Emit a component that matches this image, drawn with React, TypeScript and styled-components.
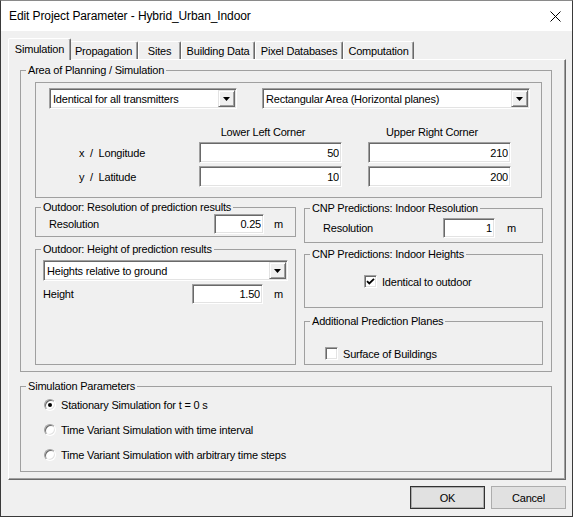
import React from 'react';
import styled, { createGlobalStyle, css } from 'styled-components';

const GlobalStyle = createGlobalStyle`
  html, body {
    margin: 0;
    padding: 0;
    background: #2d2d2d;
  }
`;

const Window = styled.div`
  box-sizing: border-box;
  width: 573px;
  height: 517px;
  display: flex;
  flex-direction: column;
  background: #f0f0f0;
  border: 1px solid #3a3a3a;
  border-top-color: #8a8a8a;
  font-family: "Liberation Sans", Arial, sans-serif;
  font-size: 11px;
  letter-spacing: -0.2px;
  color: #000;
`;

const TitleBar = styled.div`
  height: 30px;
  flex-shrink: 0;
  background: #fff;
  display: flex;
  align-items: center;
  justify-content: space-between;
  padding: 0 11px 0 8px;
  font-size: 12px;
  letter-spacing: -0.1px;
`;

const Body = styled.div`
  flex: 1;
  display: flex;
  flex-direction: column;
  padding: 6px 6px 0 7px;
`;

const TabStrip = styled.div`
  height: 22px;
  display: flex;
  align-items: flex-end;
  padding-left: 2px;
`;

const Tab = styled.div<{ $w: number; $active?: boolean }>`
  box-sizing: border-box;
  width: ${p => p.$w}px;
  height: 18px;
  display: flex;
  align-items: center;
  justify-content: center;
  background: #f0f0f0;
  border: 1px solid;
  border-bottom: none;
  border-color: #fff #696969 transparent #fff;
  box-shadow: inset -1px 0 0 #a0a0a0;
  border-radius: 2px 2px 0 0;
  white-space: nowrap;
  ${p =>
    p.$active &&
    css`
      width: ${p.$w + 4}px;
      height: 22px;
      margin: 0 -2px -1px;
      padding-bottom: 2px;
      position: relative;
      z-index: 1;
    `}
`;

const Panel = styled.div`
  box-sizing: border-box;
  height: 421px;
  display: flex;
  flex-direction: column;
  padding: 4px 13px 0 11px;
  border: 1px solid;
  border-color: #fff #696969 #696969 #fff;
  box-shadow: inset -1px -1px 0 #a0a0a0;
`;

const Group = styled.fieldset<{ $h: number; $top?: number }>`
  box-sizing: border-box;
  margin: ${p => p.$top ?? 0}px 0 0;
  padding: 0;
  min-width: 0;
  height: ${p => p.$h}px;
  border: 1px solid #a0a0a0;
  display: flex;
  flex-direction: column;
`;

const Legend = styled.legend`
  margin-left: 5px;
  padding: 0 2px;
  line-height: 13px;
`;

const InnerBox = styled.div`
  box-sizing: border-box;
  width: 507px;
  height: 116px;
  margin: 5px 0 0 14px;
  padding: 5px 0 0 13px;
  border: 1px solid #a0a0a0;
`;

const ComboRow = styled.div`
  display: flex;
  gap: 25px;
`;

const Combo = styled.div<{ $w: number }>`
  box-sizing: border-box;
  width: ${p => p.$w}px;
  height: 21px;
  display: flex;
  align-items: center;
  background: #fff;
  border: 1px solid;
  border-color: #a0a0a0 #fff #fff #a0a0a0;
  box-shadow: inset 1px 1px 0 #696969, inset -1px -1px 0 #e3e3e3;
  padding: 1px;
`;

const ComboText = styled.span`
  flex: 1;
  padding-left: 2px;
  white-space: nowrap;
  overflow: hidden;
`;

const DropButton = styled.span`
  box-sizing: border-box;
  width: 17px;
  height: 17px;
  display: flex;
  align-items: center;
  justify-content: center;
  background: #f0f0f0;
  border: 1px solid;
  border-color: #e3e3e3 #696969 #696969 #e3e3e3;
  box-shadow: inset 1px 1px 0 #fff, inset -1px -1px 0 #a0a0a0;
`;

const CoordGrid = styled.div`
  display: grid;
  grid-template-columns: 120px 143px 26px 143px;
  row-gap: 3px;
  margin: 17px 0 0 30px;
  align-items: center;
`;

const ColHead = styled.div<{ $col: number }>`
  grid-column: ${p => p.$col};
  text-align: center;
  padding-right: 15px;
  line-height: 13px;
`;

const CoordLabel = styled.div`
  grid-column: 1;
  white-space: pre;
`;

const Field = styled.input<{ $w: number; $h?: number; $col?: number }>`
  box-sizing: border-box;
  width: ${p => p.$w}px;
  height: ${p => p.$h ?? 21}px;
  ${p => p.$col && css`grid-column: ${p.$col};`}
  margin: 0;
  padding: 0 2px;
  border: 1px solid;
  border-color: #a0a0a0 #fff #fff #a0a0a0;
  box-shadow: inset 1px 1px 0 #696969, inset -1px -1px 0 #e3e3e3;
  background: #fff;
  font: inherit;
  letter-spacing: inherit;
  color: #000;
  text-align: right;
  outline: none;
`;

const Columns = styled.div`
  display: flex;
  gap: 8px;
  margin: 3px 0 0 14px;
`;

const Column = styled.div<{ $w: number; $top?: number }>`
  width: ${p => p.$w}px;
  display: flex;
  flex-direction: column;
  padding-top: ${p => p.$top ?? 0}px;
`;

const Row = styled.div<{ $pad?: string }>`
  display: flex;
  align-items: center;
  padding: ${p => p.$pad ?? '0'};
`;

const Label = styled.span<{ $w: number }>`
  width: ${p => p.$w}px;
  white-space: nowrap;
`;

const Unit = styled.span<{ $gap: number }>`
  margin-left: ${p => p.$gap}px;
`;

const Check = styled.span`
  box-sizing: border-box;
  width: 13px;
  height: 13px;
  flex-shrink: 0;
  display: flex;
  align-items: center;
  justify-content: center;
  background: #fff;
  border: 1px solid;
  border-color: #a0a0a0 #fff #fff #a0a0a0;
  box-shadow: inset 1px 1px 0 #696969, inset -1px -1px 0 #e3e3e3;
  margin-right: 5px;
`;

const Radio = styled.span<{ $on?: boolean }>`
  box-sizing: border-box;
  width: 12px;
  height: 12px;
  flex-shrink: 0;
  border-radius: 50%;
  background: #fff;
  border: 1px solid;
  border-color: #a0a0a0 #fff #fff #a0a0a0;
  box-shadow: inset 1px 1px 0 #696969, inset -1px -1px 0 #e3e3e3;
  display: flex;
  align-items: center;
  justify-content: center;
  margin-right: 5px;
  &::after {
    content: '';
    width: 4px;
    height: 4px;
    border-radius: 50%;
    background: ${p => (p.$on ? '#000' : 'transparent')};
  }
`;

const RadioList = styled.div`
  display: flex;
  flex-direction: column;
  gap: 12px;
  padding: 5px 0 0 23px;
`;

const RadioRow = styled.div`
  display: flex;
  align-items: center;
  height: 13px;
  white-space: nowrap;
`;

const ButtonRow = styled.div`
  display: flex;
  justify-content: flex-end;
  gap: 6px;
  margin-top: 6px;
`;

const Button = styled.button<{ $default?: boolean }>`
  box-sizing: border-box;
  width: 75px;
  height: 23px;
  margin: 0;
  padding: 0;
  background: #e1e1e1;
  border: 1px solid ${p => (p.$default ? '#333' : '#adadad')};
  ${p => p.$default && css`box-shadow: inset 0 0 0 1px #adadad;`}
  font: inherit;
  letter-spacing: inherit;
  color: #000;
`;

const Arrow = () => (
  <svg width="7" height="4" viewBox="0 0 7 4">
    <path d="M0 0H7L3.5 4Z" fill="#000" />
  </svg>
);

const Dropdown: React.FC<{ w: number; text: string }> = ({ w, text }) => (
  <Combo $w={w}>
    <ComboText>{text}</ComboText>
    <DropButton>
      <Arrow />
    </DropButton>
  </Combo>
);

const CheckMark = () => (
  <svg width="9" height="9" viewBox="0 0 9 9">
    <path d="M1 4.2L3.3 6.5L8 1.8" fill="none" stroke="#000" strokeWidth="1.8" />
  </svg>
);

const tabs = [
  { name: 'Simulation', w: 59 },
  { name: 'Propagation', w: 69 },
  { name: 'Sites', w: 43 },
  { name: 'Building Data', w: 74 },
  { name: 'Pixel Databases', w: 88 },
  { name: 'Computation', w: 71 },
];

const App: React.FC = () => (
  <>
    <GlobalStyle />
    <Window>
      <TitleBar>
        <span>Edit Project Parameter - Hybrid_Urban_Indoor</span>
        <svg width="11" height="11" viewBox="0 0 11 11">
          <path d="M0.5 0.5L10.5 10.5M10.5 0.5L0.5 10.5" stroke="#000" strokeWidth="1" />
        </svg>
      </TitleBar>
      <Body>
        <TabStrip>
          {tabs.map((t, i) => (
            <Tab key={t.name} $w={t.w} $active={i === 0}>
              {t.name}
            </Tab>
          ))}
        </TabStrip>
        <Panel>
          <Group $h={308}>
            <Legend>Area of Planning / Simulation</Legend>
            <InnerBox>
              <ComboRow>
                <Dropdown w={188} text="Identical for all transmitters" />
                <Dropdown w={268} text="Rectangular Area (Horizontal planes)" />
              </ComboRow>
              <CoordGrid>
                <ColHead $col={2}>Lower Left Corner</ColHead>
                <ColHead $col={4}>Upper Right Corner</ColHead>
                <CoordLabel>x  /  Longitude</CoordLabel>
                <Field $w={143} $col={2} defaultValue="50" readOnly />
                <Field $w={143} $col={4} defaultValue="210" readOnly />
                <CoordLabel>y  /  Latitude</CoordLabel>
                <Field $w={143} $col={2} defaultValue="10" readOnly />
                <Field $w={143} $col={4} defaultValue="200" readOnly />
              </CoordGrid>
            </InnerBox>
            <Columns>
              <Column $w={261}>
                <Group $h={36}>
                  <Legend>Outdoor: Resolution of prediction results</Legend>
                  <Row $pad="0 0 0 13px">
                    <Label $w={165}>Resolution</Label>
                    <Field $w={50} $h={20} defaultValue="0.25" readOnly />
                    <Unit $gap={10}>m</Unit>
                  </Row>
                </Group>
                <Group $h={122} $top={6}>
                  <Legend>Outdoor: Height of prediction results</Legend>
                  <Row $pad="4px 7px 0 7px">
                    <Dropdown w={245} text="Heights relative to ground" />
                  </Row>
                  <Row $pad="3px 0 0 7px">
                    <Label $w={149}>Height</Label>
                    <Field $w={71} $h={20} defaultValue="1.50" readOnly />
                    <Unit $gap={11}>m</Unit>
                  </Row>
                </Group>
              </Column>
              <Column $w={239} $top={1}>
                <Group $h={41}>
                  <Legend>CNP Predictions: Indoor Resolution</Legend>
                  <Row $pad="3px 0 0 18px">
                    <Label $w={120}>Resolution</Label>
                    <Field $w={52} $h={20} defaultValue="1" readOnly />
                    <Unit $gap={12}>m</Unit>
                  </Row>
                </Group>
                <Group $h={60} $top={5}>
                  <Legend>CNP Predictions: Indoor Heights</Legend>
                  <Row $pad="14px 0 0 59px">
                    <Check>
                      <CheckMark />
                    </Check>
                    Identical to outdoor
                  </Row>
                </Group>
                <Group $h={50} $top={7}>
                  <Legend>Additional Prediction Planes</Legend>
                  <Row $pad="19px 0 0 20px">
                    <Check />
                    Surface of Buildings
                  </Row>
                </Group>
              </Column>
            </Columns>
          </Group>
          <Group $h={92} $top={8}>
            <Legend>Simulation Parameters</Legend>
            <RadioList>
              <RadioRow>
                <Radio $on />
                Stationary Simulation for t = 0 s
              </RadioRow>
              <RadioRow>
                <Radio />
                Time Variant Simulation with time interval
              </RadioRow>
              <RadioRow>
                <Radio />
                Time Variant Simulation with arbitrary time steps
              </RadioRow>
            </RadioList>
          </Group>
        </Panel>
        <ButtonRow>
          <Button $default>OK</Button>
          <Button>Cancel</Button>
        </ButtonRow>
      </Body>
    </Window>
  </>
);

export default App;
